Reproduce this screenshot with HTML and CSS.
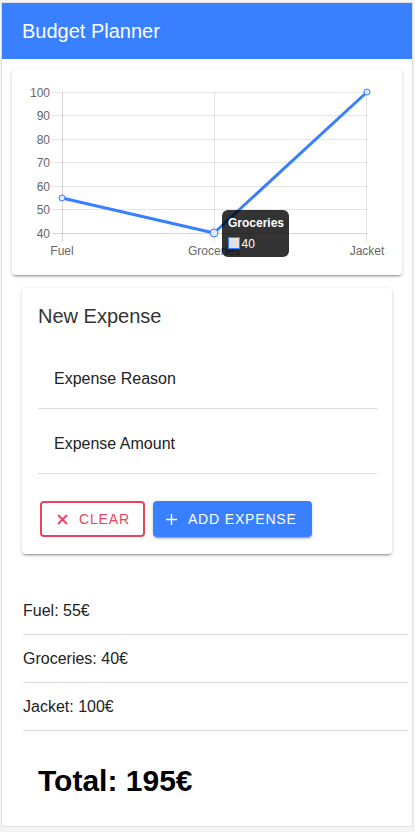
FILE: index.html
```html
<!DOCTYPE html>
<html lang="en">
<head>
<meta charset="utf-8">
<title>Budget Planner</title>
<link rel="stylesheet" href="styles.css">
</head>
<body>
<div class="app">
  <header class="toolbar">
    <h1 class="toolbar-title">Budget Planner</h1>
  </header>
  <main class="content">
    <section class="card chart-card">
      <svg class="chart" width="390" height="206" viewBox="0 0 390 206" xmlns="http://www.w3.org/2000/svg">
        <g class="grid" stroke="rgba(0,0,0,0.1)" stroke-width="1">
          <line x1="40" y1="23.5" x2="355" y2="23.5"/>
          <line x1="40" y1="46.5" x2="355" y2="46.5"/>
          <line x1="40" y1="70.5" x2="355" y2="70.5"/>
          <line x1="40" y1="93.5" x2="355" y2="93.5"/>
          <line x1="40" y1="117.5" x2="355" y2="117.5"/>
          <line x1="40" y1="140.5" x2="355" y2="140.5"/>
          <line x1="40" y1="164.5" x2="355" y2="164.5" stroke="rgba(0,0,0,0.16)"/>
          <line x1="50.5" y1="23" x2="50.5" y2="173" stroke="rgba(0,0,0,0.16)"/>
          <line x1="202.5" y1="23" x2="202.5" y2="173"/>
          <line x1="354.5" y1="23" x2="354.5" y2="173"/>
        </g>
        <g class="ticks" font-family="'Liberation Sans', Arial, sans-serif" font-size="12" fill="#666" text-anchor="end">
          <text x="38" y="27.5">100</text>
          <text x="38" y="51">90</text>
          <text x="38" y="74.5">80</text>
          <text x="38" y="98">70</text>
          <text x="38" y="121.5">60</text>
          <text x="38" y="145">50</text>
          <text x="38" y="168.5">40</text>
        </g>
        <g class="xlabels" font-family="'Liberation Sans', Arial, sans-serif" font-size="12" fill="#666" text-anchor="middle">
          <text x="50" y="186">Fuel</text>
          <text x="202" y="186">Groceries</text>
          <text x="355" y="186">Jacket</text>
        </g>
        <polyline points="50,129 202,164 355,23" fill="none" stroke="#3880ff" stroke-width="3" stroke-linejoin="round"/>
        <circle cx="50" cy="129" r="3" fill="#dfe9ff" stroke="#3880ff" stroke-width="1"/>
        <circle cx="355" cy="23" r="3" fill="#dfe9ff" stroke="#3880ff" stroke-width="1"/>
        <circle cx="202" cy="164" r="4" fill="#dfe9ff" stroke="#3880ff" stroke-width="1"/>
        <g class="tooltip">
          <rect x="210" y="141" width="67" height="47" rx="6" fill="rgba(0,0,0,0.8)"/>
          <text x="216" y="157.7" font-family="'Liberation Sans', Arial, sans-serif" font-size="12" font-weight="bold" fill="#fff">Groceries</text>
          <rect x="216.5" y="168.5" width="11" height="11" fill="#e2e2e2" stroke="#3880ff" stroke-width="1"/>
          <text x="229.5" y="179" font-family="'Liberation Sans', Arial, sans-serif" font-size="12" fill="#fff">40</text>
        </g>
      </svg>
    </section>

    <section class="card expense-card">
      <h2 class="card-title">New Expense</h2>
      <div class="form">
        <div class="item"><span class="placeholder">Expense Reason</span></div>
        <div class="item"><span class="placeholder">Expense Amount</span></div>
      </div>
      <div class="buttons">
        <button class="btn btn-clear" type="button">
          <svg class="btn-icon" width="11" height="11" viewBox="0 0 11 11"><path d="M1 1 L10 10 M10 1 L1 10" stroke="currentColor" stroke-width="1.8" fill="none"/></svg>
          <span>Clear</span>
        </button>
        <button class="btn btn-add" type="button">
          <svg class="btn-icon" width="11" height="11" viewBox="0 0 11 11"><path d="M5.5 0 V11 M0 5.5 H11" stroke="currentColor" stroke-width="1.4" fill="none"/></svg>
          <span>Add Expense</span>
        </button>
      </div>
    </section>

    <ul class="expense-list">
      <li class="expense-item">Fuel: 55€</li>
      <li class="expense-item">Groceries: 40€</li>
      <li class="expense-item">Jacket: 100€</li>
    </ul>

    <p class="total">Total: 195€</p>
  </main>
</div>
</body>
</html>
```

FILE: styles.css
```css
* { box-sizing: border-box; }

html, body {
  margin: 0;
  padding: 0;
}

body {
  background: #f4f4f4;
  font-family: "Liberation Sans", Arial, sans-serif;
  color: #222;
}

.app {
  margin: 2px 2px 0 1px;
  border: 1px solid #e0e0e0;
  width: 412px;
  height: 825px;
  background: #fff;
  display: flex;
  flex-direction: column;
}

.toolbar {
  height: 56px;
  flex: 0 0 56px;
  background: #3880ff;
  display: flex;
  align-items: center;
  padding-left: 20px;
}

.toolbar-title {
  margin: 0;
  font-size: 20px;
  font-weight: 400;
  color: #fff;
  line-height: 24px;
}

.content {
  flex: 1;
  display: flex;
  flex-direction: column;
}

.card {
  background: #fff;
  border-radius: 4px;
  box-shadow: 0 3px 1px -2px rgba(0,0,0,0.2), 0 2px 2px 0 rgba(0,0,0,0.14), 0 1px 5px 0 rgba(0,0,0,0.12);
}

.chart-card {
  margin: 10px 10px 0 10px;
  height: 206px;
}

.chart {
  display: block;
}

.expense-card {
  margin: 13px 20px 0 20px;
  padding: 16px 15px 17px 16px;
}

.card-title {
  margin: 0;
  font-size: 20px;
  font-weight: 400;
  line-height: 24px;
  color: #333;
}

.form {
  padding-top: 16px;
}

.item {
  height: 65px;
  border-bottom: 1px solid #dcdcdc;
  padding: 25.5px 0 0 16px;
}

.placeholder {
  display: block;
  font-size: 16px;
  line-height: 18px;
  color: #222;
}

.buttons {
  display: flex;
  gap: 8px;
  margin: 27px 0 0 2px;
}

.btn {
  height: 36px;
  display: flex;
  align-items: center;
  gap: 11px;
  font-family: "Liberation Sans", Arial, sans-serif;
  font-size: 14px;
  letter-spacing: 0.06em;
  text-transform: uppercase;
  border-radius: 4px;
  cursor: pointer;
}

.btn-icon {
  display: block;
  flex: 0 0 auto;
}

.btn-clear {
  background: #fff;
  color: #eb445a;
  border: 2px solid #eb445a;
  padding: 0 13px 0 15px;
}

.btn-add {
  background: #3880ff;
  color: #fff;
  border: none;
  padding: 0 15px 0 13px;
  box-shadow: 0 3px 1px -2px rgba(0,0,0,0.2), 0 2px 2px 0 rgba(0,0,0,0.14), 0 1px 5px 0 rgba(0,0,0,0.12);
}

.expense-list {
  list-style: none;
  margin: 33px 4px 0 21px;
  padding: 0;
}

.expense-item {
  height: 48px;
  border-bottom: 1px solid #dcdcdc;
  display: flex;
  align-items: center;
  font-size: 16px;
  color: #222;
}

.total {
  margin: 32px 0 0 36px;
  font-size: 30px;
  font-weight: 700;
  line-height: 36px;
  color: #000;
}
```
